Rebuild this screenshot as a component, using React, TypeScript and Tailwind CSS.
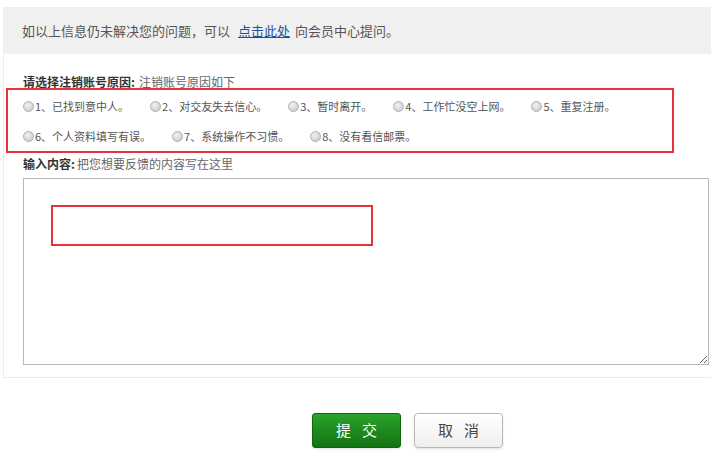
import React from "react";

const reasons1 = ["1、已找到意中人。", "2、对交友失去信心。", "3、暂时离开。", "4、工作忙没空上网。", "5、重复注册。"];
const reasons2 = ["6、个人资料填写有误。", "7、系统操作不习惯。", "8、没有看信邮票。"];

function Radio({ label }: { label: string }) {
    return (
        <label className="flex items-center cursor-pointer">
            <span className="w-[11px] h-[11px] rounded-full border border-[#b0b0b0] bg-[radial-gradient(circle_at_40%_35%,#f2f2f2,#c4c4c4)] mr-[1px] shrink-0" />
            <span className="text-[11px] leading-[16px] text-[#555]">{label}</span>
        </label>
    );
}

export default function App() {
    return (
        <div className="w-[712px] h-[461px] bg-white font-['Noto_Sans_CJK_SC','Noto_Sans',sans-serif] overflow-hidden">
            <div className="pt-[7px] pl-[3px] pr-[1px]">
                <div className="h-[47px] bg-[#f0f0f0] flex items-center pl-[19px] text-[13px] text-[#555]">
                    如以上信息仍未解决您的问题，可以
                    <a href="#" className="ml-[8px] mr-[5px] text-[#1c4fa3] underline">点击此处</a>
                    向会员中心提问。
                </div>

                <div className="h-[324px] border-l border-b border-[#ececec]">
                    <div className="pt-[20px] pl-[19px] text-[12px] leading-[16px] -mb-[2px]">
                        <span className="font-bold text-[#333]">请选择注销账号原因:</span>
                        <span className="ml-[4px] text-[#666]">注销账号原因如下</span>
                    </div>

                    <div className="ml-[2px] w-[668px] h-[65px] border-2 border-[#e5323d] pt-[8px] pl-[15px]">
                        <div className="flex gap-[21px]">
                            {reasons1.map((r) => (
                                <Radio key={r} label={r} />
                            ))}
                        </div>
                        <div className="flex gap-[21px] mt-[14px]">
                            {reasons2.map((r) => (
                                <Radio key={r} label={r} />
                            ))}
                        </div>
                    </div>

                    <div className="mt-[3px] pl-[19px] text-[12px] leading-[16px]">
                        <span className="font-bold text-[#333]">输入内容:</span>
                        <span className="ml-[2px] text-[#666]">把您想要反馈的内容写在这里</span>
                    </div>

                    <div className="relative mt-[6px] ml-[19px] w-[686px] h-[187px]">
                        <textarea className="block w-full h-full border border-[#b8b8b8] outline-none text-[12px] p-1" />
                        <div className="absolute left-[28px] top-[27px] w-[322px] h-[41px] border-2 border-[#e5323d] pointer-events-none" />
                    </div>
                </div>
            </div>

            <div className="flex gap-[13px] pl-[312px] mt-[35px]">
                <button className="w-[89px] h-[35px] rounded-[3px] border border-[#0f660f] bg-gradient-to-b from-[#2aa32a] to-[#137313] text-white text-[15px] flex items-center justify-center gap-[11px] shadow-sm">
                    <span>提</span>
                    <span>交</span>
                </button>
                <button className="w-[89px] h-[35px] rounded-[4px] border border-[#b8b8b8] bg-gradient-to-b from-white to-[#efefef] text-[#444] text-[15px] flex items-center justify-center gap-[11px] shadow-sm">
                    <span>取</span>
                    <span>消</span>
                </button>
            </div>
        </div>
    );
}
